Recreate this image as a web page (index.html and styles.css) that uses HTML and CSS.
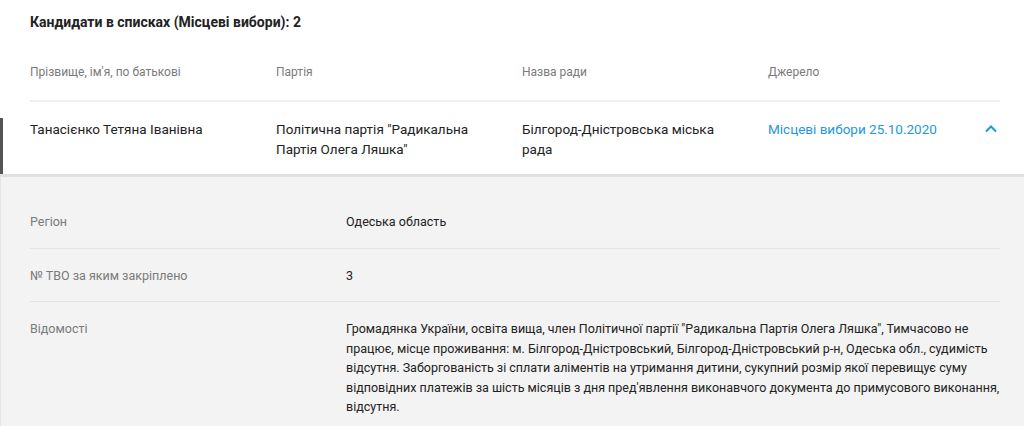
FILE: index.html
```
<!DOCTYPE html>
<html lang="uk">

  <head>
    <meta charset="UTF-8">
    <title>Кандидати в списках</title>
    <link rel="stylesheet" href="styles.css">
  </head>

  <body>
    <h3 class="title">Кандидати в списках (Місцеві вибори): 2</h3>

    <div class="table">
      <div class="row head">
        <div class="cell">Прізвище, ім'я, по батькові</div>
        <div class="cell">Партія</div>
        <div class="cell">Назва ради</div>
        <div class="cell">Джерело</div>
      </div>

      <div class="row item open">
        <div class="cell">Танасієнко Тетяна Іванівна</div>
        <div class="cell">Політична партія "Радикальна Партія Олега Ляшка"</div>
        <div class="cell">Білгород-Дністровська міська рада</div>
        <div class="cell source">
          <a href="#">Місцеві вибори 25.10.2020</a>
          <svg class="chevron" width="14" height="9" viewBox="0 0 14 9">
            <path d="M2 7.5 L7 2.5 L12 7.5" fill="none" stroke="#1f98dc" stroke-width="2"/>
          </svg>
        </div>
      </div>

      <div class="details">
        <div class="detail">
          <div class="label">Регіон</div>
          <div class="value">Одеська область</div>
        </div>
        <div class="detail">
          <div class="label">№ ТВО за яким закріплено</div>
          <div class="value">3</div>
        </div>
        <div class="detail">
          <div class="label">Відомості</div>
          <div class="value">Громадянка України, освіта вища, член Політичної партії "Радикальна Партія Олега Ляшка", Тимчасово не працює, місце проживання: м. Білгород-Дністровський, Білгород-Дністровський р-н, Одеська обл., судимість відсутня. Заборгованість зі сплати аліментів на утримання дитини, сукупний розмір якої перевищує суму відповідних платежів за шість місяців з дня пред'явлення виконавчого документа до примусового виконання, відсутня.</div>
        </div>
      </div>
    </div>
  </body>

</html>
```

FILE: styles.css
```
body {
  margin: 0;
  font-family: Roboto, "Liberation Sans", sans-serif;
  color: #222;
  background-color: white;
}

.title {
  margin: 0;
  padding: 12px 30px 0;
  font-size: 14px;
  font-weight: 700;
  line-height: 20px;
  color: #222;
}

.row {
  display: grid;
  grid-template-columns: 246px 246px 246px 1fr;
  margin: 0 24px 0 30px;
}

.head {
  padding-top: 30px;
  height: 70px;
  box-sizing: border-box;
  border-bottom: 2px solid #f0f0f0;
  font-size: 12px;
  color: #7a7a7a;
  line-height: 20px;
}

.item {
  position: relative;
  padding: 17px 0 15px;
  font-size: 13.5px;
  line-height: 20px;
  color: #222;
}

.item .cell {
  padding-right: 30px;
}

.item .source {
  padding-right: 0;
}

.open::before {
  content: '';
  position: absolute;
  left: -30px;
  top: 16px;
  bottom: 0;
  width: 3px;
  background-color: #555;
}

.source {
  display: flex;
  justify-content: space-between;
  align-items: flex-start;
}

.source a {
  color: #1f98dc;
  text-decoration: none;
}

.chevron {
  margin-top: 5px;
  margin-right: 2px;
}

.details {
  background-color: #f3f3f3;
  border-top: 3px solid #e0e0e0;
  border-left: 1px solid #e6e6e6;
  padding: 18px 24px 0 29px;
}

.detail {
  display: grid;
  grid-template-columns: 316px 1fr;
  padding: 17px 0 16px;
  border-bottom: 1px solid #e4e4e4;
  font-size: 12.5px;
  line-height: 19.5px;
}

.detail:last-child {
  border-bottom: none;
}

.label {
  color: #7a7a7a;
}

.value {
  color: #222;
}
```
